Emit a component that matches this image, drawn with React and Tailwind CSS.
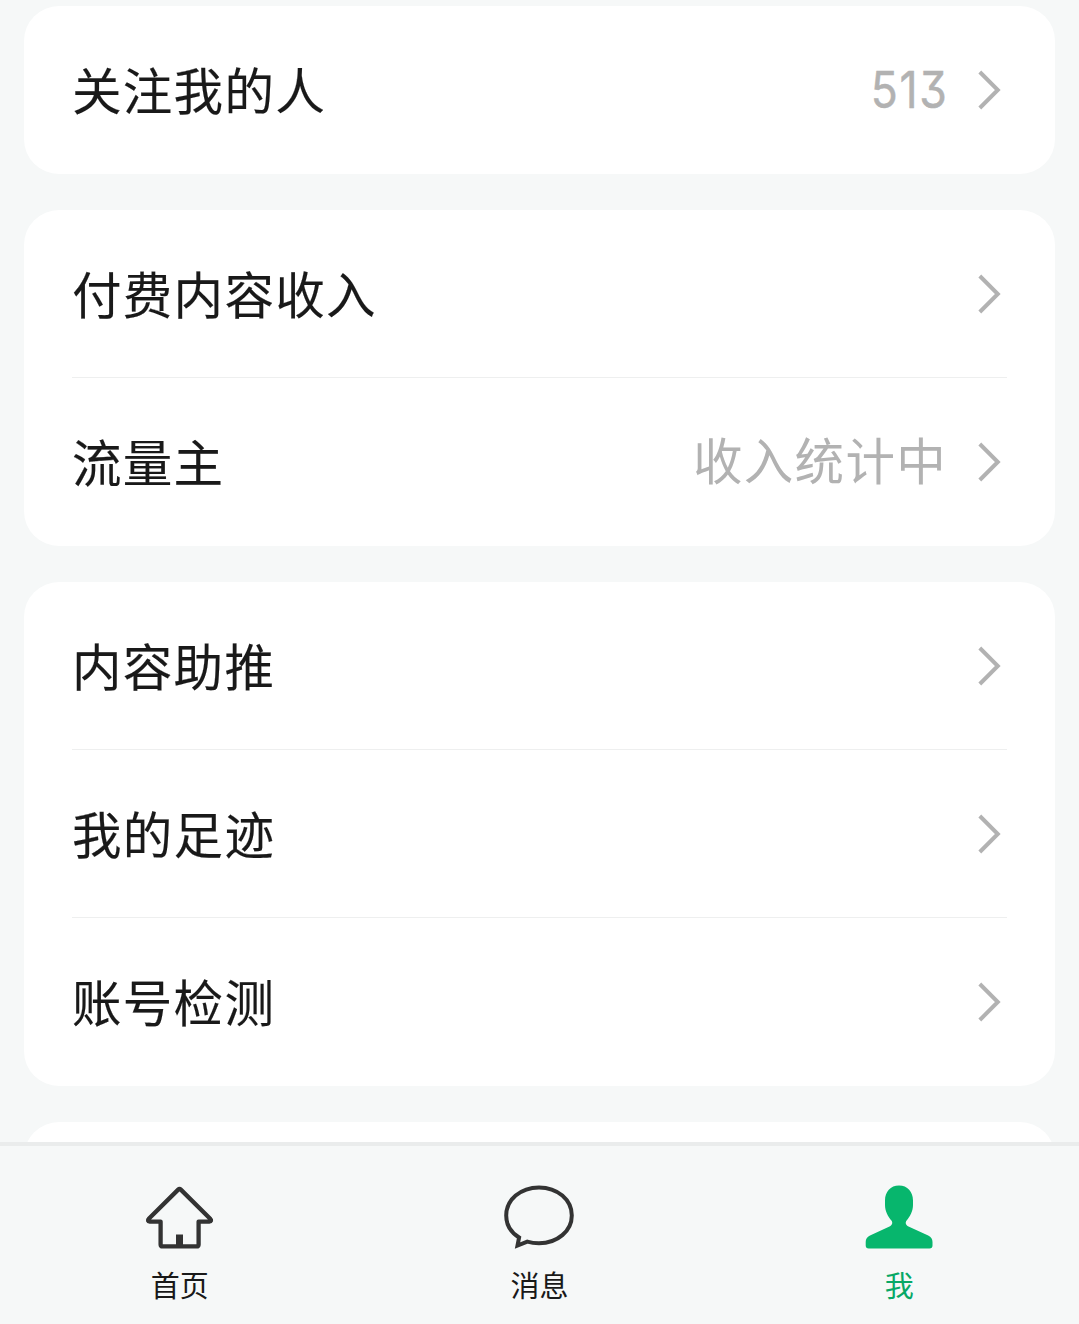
import clsx from "clsx"

const groups = [
  [{ label: "关注我的人", count: "513" }],
  [{ label: "付费内容收入" }, { label: "流量主", note: "收入统计中" }],
  [{ label: "内容助推" }, { label: "我的足迹" }, { label: "账号检测" }],
]

function Chevron() {
  return (
    <svg className="ml-[32px] h-10 w-6 shrink-0" viewBox="0 0 24 40" fill="none">
      <path d="M2.8 2 20.8 20 2.8 38" stroke="#b2b2b2" strokeWidth="4" />
    </svg>
  )
}

function HomeIcon() {
  return (
    <svg className="h-[70px] w-[72px]" viewBox="0 0 72 70" fill="none" stroke="#333" strokeWidth="4.3" strokeLinejoin="round">
      <path d="M34.2 6.600 4.800 35.800C3.400 37.200 3.900 38.600 5.600 38.600H16.600V61.400Q16.600 63.400 18.600 63.400H52.600Q54.600 63.400 54.600 61.400V38.600H65.400C67.200 38.600 67.600 37.200 66.200 35.800L36.800 6.600Q35.500 5.300 34.200 6.600Z" />
      <path d="M35.500 51.500V63" strokeWidth="7" />
    </svg>
  )
}

function MessageIcon() {
  return (
    <svg className="h-[70px] w-[72px]" viewBox="0 0 72 70" fill="none" stroke="#333" strokeWidth="4">
      <path d="M36 4.400C17.500 4.400 3.200 16.800 3.200 32.400C3.200 42 8.500 49.700 16.100 54.500L14.500 62.600L24.300 58.600C28 59.700 32 60.200 36 60.200C54.500 60.200 68.800 47.900 68.800 32.400C68.800 16.800 54.500 4.400 36 4.400Z" />
    </svg>
  )
}

function MeIcon() {
  return (
    <svg className="h-[70px] w-[72px]" viewBox="0 0 72 70" fill="#07b66d">
      <path d="M36 2.500C27.500 2.500 22 8.800 22 17.500V22C22 28 25 33.500 28.400 37.500C30 39.500 29.300 42.200 26.500 43.500L7 52.500C4 53.900 2.700 56 2.700 59V62.500Q2.700 65.500 5.700 65.500H66.500Q69.500 65.500 69.500 62.500V59C69.500 56 68.200 53.900 65.200 52.500L45.500 43.500C42.700 42.200 42 39.500 43.600 37.500C47 33.500 50 28 50 22V17.500C50 8.800 44.500 2.500 36 2.500Z" />
    </svg>
  )
}

const tabs = [
  { label: "首页", icon: HomeIcon },
  { label: "消息", icon: MessageIcon },
  { label: "我", icon: MeIcon, active: true },
]

export default function App() {
  return (
    <div className="flex h-[1324px] w-[1079px] flex-col overflow-hidden bg-[#f6f8f8] font-['Noto_Sans_CJK_SC',sans-serif] text-[#191919]">
      <main className="flex h-[1142px] shrink-0 flex-col gap-9 overflow-hidden px-6 pt-[6px]">
        {groups.map((rows, i) => (
          <section key={i} className="shrink-0 rounded-[35px] bg-white px-12">
            {rows.map((row, j) => (
              <div
                key={row.label}
                className={clsx(
                  "flex h-[168px] items-center pr-[6px]",
                  j < rows.length - 1 && "border-b border-[#eeefef]"
                )}
              >
                <span className="flex-1 pb-[2px] text-[49.5px] leading-[70px] tracking-[1.3px] [-webkit-text-stroke:0.15px]">{row.label}</span>
                {row.count && (
                  <span className="-mr-[4px] origin-right scale-x-[0.89] font-['Inter',sans-serif] text-[50px] leading-[70px] tracking-[2px] text-[#b2b2b2] [font-feature-settings:'cv09'] [-webkit-text-stroke:0.5px]">
                    {row.count}
                  </span>
                )}
                {row.note && (
                  <span className="-mr-[2px] pb-[7px] text-[49.5px] leading-[70px] tracking-[1.3px] text-[#b2b2b2]">{row.note}</span>
                )}
                <Chevron />
              </div>
            ))}
          </section>
        ))}
        <section className="h-[168px] shrink-0 rounded-[35px] bg-white" />
      </main>
      <nav className="grid h-[182px] shrink-0 grid-cols-3 border-t-4 border-[#eaecec]">
        {tabs.map(({ label, icon: Icon, active }) => (
          <div key={label} className="flex flex-col items-center pt-[37px]">
            <Icon />
            <span className={clsx("mt-[9px] text-[29px] leading-[44px]", active && "text-[#07a866]")}>{label}</span>
          </div>
        ))}
      </nav>
    </div>
  )
}
